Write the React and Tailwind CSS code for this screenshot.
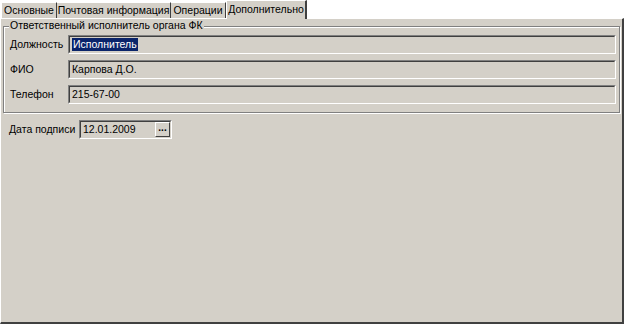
import React from 'react';

const font = { fontFamily: '"Liberation Sans", Arial, sans-serif' };

const Field = ({ children, className = '' }) => (
  <div className={`h-[19px] border-t border-l border-t-[#808080] border-l-[#808080] border-b border-r border-b-white border-r-white ${className}`}>
    <div className="h-full border-t border-l border-t-[#404040] border-l-[#404040] border-b border-r border-b-[#d4d0c8] border-r-[#d4d0c8] bg-[#d4d0c8] flex items-center pl-[2px] text-[10.5px] text-black leading-none">
      {children}
    </div>
  </div>
);

const Row = ({ label, children }) => (
  <div className="flex items-center h-[19px]">
    <div className="w-[64px] pl-[6px] text-[10.5px] text-black shrink-0 whitespace-nowrap">{label}</div>
    <Field className="flex-1">{children}</Field>
  </div>
);

const tabs = [
  { t: 'Основные', w: 'w-[55px]' },
  { t: 'Почтовая информация', w: 'w-[114px]' },
  { t: 'Операции', w: 'w-[55px]' },
];

export default function App() {
  return (
    <div className="w-[624px] h-[324px] bg-white flex flex-col" style={font}>
      <div className="h-[18px] flex items-end pl-[2px] shrink-0 relative z-10">
        {tabs.map(({ t, w }) => (
          <div
            key={t}
            className={`${w} shrink-0 h-[16px] bg-[#d4d0c8] border-t border-t-white border-r border-r-[#404040] flex items-center justify-center text-[10.5px] text-black leading-none whitespace-nowrap`}
          >
            {t}
          </div>
        ))}
        <div className="w-[81px] shrink-0 h-[19px] mb-[-1px] bg-[#d4d0c8] border-t border-l border-t-white border-l-white border-r-2 border-r-[#404040] flex items-start justify-center pt-[3px] text-[10.5px] text-black leading-none whitespace-nowrap">
          Дополнительно
        </div>
      </div>
      <div className="flex-1 bg-[#d4d0c8] border-t border-t-white border-l border-l-white border-r-2 border-r-[#404040] border-b-2 border-b-[#404040] flex flex-col px-[2px]">
        <div className="mt-[7px] border border-[#808080] shadow-[inset_1px_1px_0_white,1px_1px_0_white] relative h-[87px]">
          <div className="absolute left-[5px] top-[-7px] bg-[#d4d0c8] px-[1px] text-[10.5px] text-black leading-none whitespace-nowrap">
            Ответственный исполнитель органа ФК
          </div>
          <div className="flex flex-col gap-[6px] pt-[8px] pr-[3px]">
            <Row label="Должность">
              <span className="bg-[#0a246a] text-white px-[1px] py-[1px]">Исполнитель</span>
            </Row>
            <Row label="ФИО">Карпова Д.О.</Row>
            <Row label="Телефон">215-67-00</Row>
          </div>
        </div>
        <div className="flex items-center mt-[7px] h-[19px]">
          <div className="w-[76px] shrink-0 pl-[6px] text-[10.5px] text-black whitespace-nowrap">Дата подписи</div>
          <Field className="w-[93px]">
            <div className="flex-1">12.01.2009</div>
            <div className="w-[15px] h-[15px] bg-[#d4d0c8] border-t border-l border-t-white border-l-white border-b border-r border-b-[#404040] border-r-[#404040] flex items-center justify-center text-[10px] font-bold leading-none pb-[3px]">
              ...
            </div>
          </Field>
        </div>
      </div>
    </div>
  );
}
